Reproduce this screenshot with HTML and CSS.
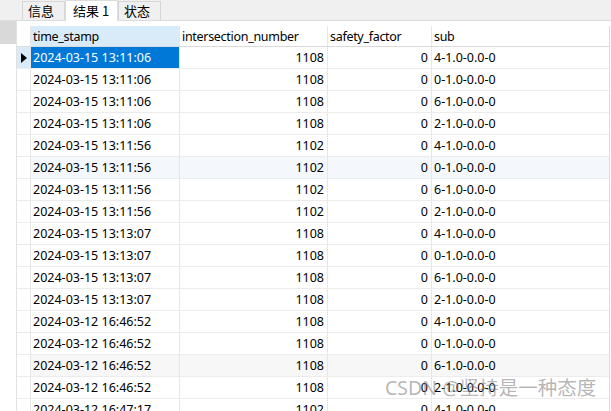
FILE: index.html
```html
<!DOCTYPE html>
<html>
<head>
<meta charset="utf-8">
<link rel="stylesheet" href="styles.css">
</head>
<body>
<div class="tabs">
  <div class="tab-spacer"></div>
  <div class="tab">信息</div>
  <div class="tab active">结果 1</div>
  <div class="tab">状态</div>
</div>
<div class="main">
  <div class="side"><div class="side-box"></div></div>
  <div class="grid">
    <div class="row head">
      <div class="c rh"></div>
      <div class="c c1 sel-head">time_stamp</div>
      <div class="c c2">intersection_number</div>
      <div class="c c3">safety_factor</div>
      <div class="c c4">sub</div>
    </div>
    <div class="row">
      <div class="c rh cur"><span class="tri"></span></div>
      <div class="c c1 sel">2024-03-15 13:11:06</div>
      <div class="c c2 num">1108</div>
      <div class="c c3 num">0</div>
      <div class="c c4">4-1.0-0.0-0</div>
    </div>
    <div class="row">
      <div class="c rh"></div>
      <div class="c c1">2024-03-15 13:11:06</div>
      <div class="c c2 num">1108</div>
      <div class="c c3 num">0</div>
      <div class="c c4">0-1.0-0.0-0</div>
    </div>
    <div class="row">
      <div class="c rh"></div>
      <div class="c c1">2024-03-15 13:11:06</div>
      <div class="c c2 num">1108</div>
      <div class="c c3 num">0</div>
      <div class="c c4">6-1.0-0.0-0</div>
    </div>
    <div class="row">
      <div class="c rh"></div>
      <div class="c c1">2024-03-15 13:11:06</div>
      <div class="c c2 num">1108</div>
      <div class="c c3 num">0</div>
      <div class="c c4">2-1.0-0.0-0</div>
    </div>
    <div class="row">
      <div class="c rh"></div>
      <div class="c c1">2024-03-15 13:11:56</div>
      <div class="c c2 num">1102</div>
      <div class="c c3 num">0</div>
      <div class="c c4">4-1.0-0.0-0</div>
    </div>
    <div class="row tint">
      <div class="c rh"></div>
      <div class="c c1">2024-03-15 13:11:56</div>
      <div class="c c2 num">1102</div>
      <div class="c c3 num">0</div>
      <div class="c c4">0-1.0-0.0-0</div>
    </div>
    <div class="row">
      <div class="c rh"></div>
      <div class="c c1">2024-03-15 13:11:56</div>
      <div class="c c2 num">1102</div>
      <div class="c c3 num">0</div>
      <div class="c c4">6-1.0-0.0-0</div>
    </div>
    <div class="row">
      <div class="c rh"></div>
      <div class="c c1">2024-03-15 13:11:56</div>
      <div class="c c2 num">1102</div>
      <div class="c c3 num">0</div>
      <div class="c c4">2-1.0-0.0-0</div>
    </div>
    <div class="row">
      <div class="c rh"></div>
      <div class="c c1">2024-03-15 13:13:07</div>
      <div class="c c2 num">1108</div>
      <div class="c c3 num">0</div>
      <div class="c c4">4-1.0-0.0-0</div>
    </div>
    <div class="row">
      <div class="c rh"></div>
      <div class="c c1">2024-03-15 13:13:07</div>
      <div class="c c2 num">1108</div>
      <div class="c c3 num">0</div>
      <div class="c c4">0-1.0-0.0-0</div>
    </div>
    <div class="row">
      <div class="c rh"></div>
      <div class="c c1">2024-03-15 13:13:07</div>
      <div class="c c2 num">1108</div>
      <div class="c c3 num">0</div>
      <div class="c c4">6-1.0-0.0-0</div>
    </div>
    <div class="row">
      <div class="c rh"></div>
      <div class="c c1">2024-03-15 13:13:07</div>
      <div class="c c2 num">1108</div>
      <div class="c c3 num">0</div>
      <div class="c c4">2-1.0-0.0-0</div>
    </div>
    <div class="row">
      <div class="c rh"></div>
      <div class="c c1">2024-03-12 16:46:52</div>
      <div class="c c2 num">1108</div>
      <div class="c c3 num">0</div>
      <div class="c c4">4-1.0-0.0-0</div>
    </div>
    <div class="row">
      <div class="c rh"></div>
      <div class="c c1">2024-03-12 16:46:52</div>
      <div class="c c2 num">1108</div>
      <div class="c c3 num">0</div>
      <div class="c c4">0-1.0-0.0-0</div>
    </div>
    <div class="row shade">
      <div class="c rh"></div>
      <div class="c c1">2024-03-12 16:46:52</div>
      <div class="c c2 num">1108</div>
      <div class="c c3 num">0</div>
      <div class="c c4">6-1.0-0.0-0</div>
    </div>
    <div class="row">
      <div class="c rh"></div>
      <div class="c c1">2024-03-12 16:46:52</div>
      <div class="c c2 num">1108</div>
      <div class="c c3 num">0</div>
      <div class="c c4">2-1.0-0.0-0</div>
    </div>
    <div class="row">
      <div class="c rh"></div>
      <div class="c c1">2024-03-12 16:47:17</div>
      <div class="c c2 num">1102</div>
      <div class="c c3 num">0</div>
      <div class="c c4">4-1.0-0.0-0</div>
    </div>
  </div>
  <div class="vscroll"></div>
</div>
<div class="watermark">CSDN @坚持是一种态度</div>
</body>
</html>
```

FILE: styles.css
```css
html, body {
  margin: 0;
  padding: 0;
  width: 611px;
  height: 411px;
  overflow: hidden;
  background: #ffffff;
  font-family: "Noto Sans", "Noto Sans CJK SC", sans-serif;
  font-size: 12.5px;
  color: #000000;
}

.tabs {
  display: flex;
  align-items: flex-end;
  height: 20px;
  background: #f0f0f0;
  border-bottom: 1px solid #dcdcdc;
}

.tab-spacer {
  width: 22px;
}

.tab {
  box-sizing: border-box;
  height: 19px;
  width: 43px;
  padding-left: 5px;
  border: 1px solid #d6d6d6;
  border-bottom: none;
  background: #f0f0f0;
  font-family: "Noto Sans CJK SC", sans-serif;
  font-size: 13px;
  line-height: 17px;
}

.tab.active {
  height: 21px;
  width: 53px;
  margin-bottom: -1px;
  background: #ffffff;
  border-color: #dcdcdc;
  padding-left: 7px;
  line-height: 19px;
}

.main {
  display: flex;
  height: 390px;
}

.side {
  width: 16px;
  border-right: 1px solid #e2e2e2;
  flex: none;
}

.side-box {
  height: 23px;
  background: #d9d9d9;
}

.grid {
  padding-top: 5px;
  width: 592px;
  flex: none;
}

.row {
  display: flex;
  height: 22px;
  box-sizing: border-box;
  border-bottom: 1px solid #ececec;
}

.row.head {
  height: 21px;
  border-bottom: 1px solid #dadada;
  letter-spacing: -0.3px;
}

.row.tint .c1, .row.tint .c2, .row.tint .c3, .row.tint .c4 {
  background: #f4f8fc;
}

.row.shade .c1, .row.shade .c2, .row.shade .c3, .row.shade .c4 {
  background: #f7f7f7;
}

.c {
  box-sizing: border-box;
  height: 100%;
  border-right: 1px solid #e6e6e6;
  padding-left: 2px;
  padding-right: 3px;
  white-space: nowrap;
  overflow: hidden;
  display: flex;
  align-items: center;
}

.rh {
  width: 14px;
  padding: 0;
  justify-content: center;
}

.rh.cur {
  background: #d9ebf9;
}

.tri {
  width: 0;
  height: 0;
  border-top: 5px solid transparent;
  border-bottom: 5px solid transparent;
  border-left: 6px solid #000000;
}

.c1 { width: 149px; }
.c2 { width: 148px; }
.c3 { width: 104px; }
.c4 { width: 177px; border-right: none; }

.num {
  justify-content: flex-end;
}

.sel-head {
  background: #d9ebf9;
}

.sel {
  background: #0078d7;
  color: #ffffff;
}

.vscroll {
  margin-top: 5px;
  width: 1px;
  background: #dcdcdc;
  height: 385px;
}

.watermark {
  position: absolute;
  left: 385px;
  top: 375px;
  font-family: "Noto Sans", "Noto Sans CJK SC", sans-serif;
  font-size: 19.5px;
  line-height: 26px;
  color: rgba(120, 120, 120, 0.55);
  white-space: nowrap;
}
```
